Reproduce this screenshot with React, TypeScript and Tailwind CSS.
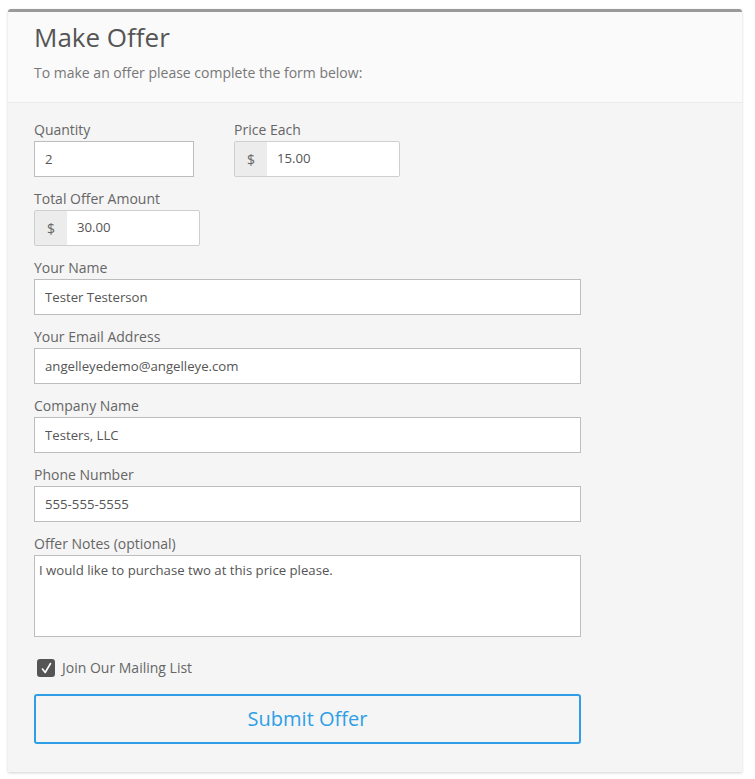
import React from "react";

const font = { fontFamily: '"Open Sans", "Noto Sans", sans-serif' };

function Label({ children }: { children: React.ReactNode }) {
  return <label className="block h-[20px] text-[14px] leading-[20px] text-[#666] mb-px">{children}</label>;
}

function TextInput({ value, width }: { value: string; width: string }) {
  return (
    <input
      readOnly
      value={value}
      className={`${width} block h-[36px] border border-[#bdbdbd] bg-white px-[10px] text-[13.2px] text-[#555] outline-none`}
    />
  );
}

function MoneyInput({ value }: { value: string }) {
  return (
    <div className="flex h-[36px] w-[166px] overflow-hidden rounded-[2px] border border-[#cfcfcf]">
      <span className="flex w-[32px] items-center justify-center bg-[#ececec] text-[14px] text-[#666]">$</span>
      <input readOnly value={value} className="min-w-0 flex-1 bg-white px-[10px] text-[13.2px] text-[#555] outline-none" />
    </div>
  );
}

export default function App() {
  return (
    <div className="min-h-screen bg-white px-[8px] pt-[9px]" style={font}>
      <div className="w-[734px] overflow-hidden rounded-t-[3px] border-t-[3px] border-[#9a9a9a] bg-[#f5f5f5] shadow-[0_1px_3px_rgba(0,0,0,0.18)]">
        <div className="border-b border-[#ebebeb] bg-[#fafafa] px-[26px] pb-[19px] pt-[9px]">
          <h1 className="text-[26px] leading-[32px] text-[#555]">Make Offer</h1>
          <p className="mt-[10px] text-[14px] leading-[20px] text-[#777]">To make an offer please complete the form below:</p>
        </div>
        <form className="px-[26px] pb-[28px] pt-[17px]">
          <div className="flex gap-[40px]">
            <div>
              <Label>Quantity</Label>
              <TextInput value="2" width="w-[160px]" />
            </div>
            <div>
              <Label>Price Each</Label>
              <MoneyInput value="15.00" />
            </div>
          </div>
          <div className="mt-[12px]">
            <Label>Total Offer Amount</Label>
            <MoneyInput value="30.00" />
          </div>
          <div className="mt-[12px]">
            <Label>Your Name</Label>
            <TextInput value="Tester Testerson" width="w-[547px]" />
          </div>
          <div className="mt-[12px]">
            <Label>Your Email Address</Label>
            <TextInput value="angelleyedemo@angelleye.com" width="w-[547px]" />
          </div>
          <div className="mt-[12px]">
            <Label>Company Name</Label>
            <TextInput value="Testers, LLC" width="w-[547px]" />
          </div>
          <div className="mt-[12px]">
            <Label>Phone Number</Label>
            <TextInput value="555-555-5555" width="w-[547px]" />
          </div>
          <div className="mt-[12px]">
            <Label>Offer Notes (optional)</Label>
            <textarea
              readOnly
              value="I would like to purchase two at this price please."
              className="block h-[82px] w-[547px] resize-none border border-[#bdbdbd] bg-white px-[4px] py-[4px] text-[13.2px] leading-[20px] text-[#555] outline-none"
            />
          </div>
          <div className="mt-[21px] flex items-center gap-[7px] pl-[3px]">
            <span className="flex h-[18px] w-[18px] items-center justify-center rounded-[3px] bg-[#555]">
              <svg width="13" height="13" viewBox="0 0 13 13" fill="none">
                <path d="M2.5 7 L5.2 10.5 L10.5 1.5" stroke="white" strokeWidth="1.6" strokeLinecap="round" strokeLinejoin="round" />
              </svg>
            </span>
            <span className="text-[14px] leading-[20px] text-[#666]">Join Our Mailing List</span>
          </div>
          <button
            type="button"
            className="mt-[16px] block h-[50px] w-[547px] rounded-[3px] border-2 border-[#2e9fe6] bg-transparent text-[20px] text-[#2e9fe6]"
          >
            Submit Offer
          </button>
        </form>
      </div>
    </div>
  );
}
